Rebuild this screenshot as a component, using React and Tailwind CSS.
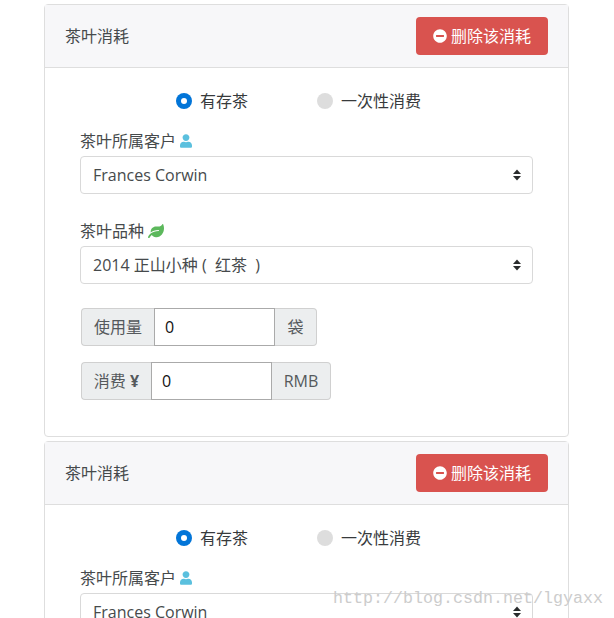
import React from "react";
import { FaUser, FaLeaf, FaMinusCircle } from "react-icons/fa";

function Radio({ checked, label }) {
  return (
    <label className="flex items-center gap-2">
      {checked ? (
        <span className="w-4 h-4 rounded-full bg-[#0275d8] flex items-center justify-center">
          <span className="w-1.5 h-1.5 rounded-full bg-white" />
        </span>
      ) : (
        <span className="w-4 h-4 rounded-full bg-[#dddddd]" />
      )}
      <span>{label}</span>
    </label>
  );
}

function Select({ value }) {
  return (
    <div className="relative">
      <select
        defaultValue={value}
        className="block w-full h-[38px] appearance-none bg-white border border-[#d9d9d9] rounded-[4px] pl-3 pr-8 text-[#464a4c] outline-none"
      >
        <option>{value}</option>
      </select>
      <svg className="absolute right-[12px] top-[13px] w-2 h-3" viewBox="0 0 8 12" fill="#292b2c">
        <path d="M4 0.5 L8 5 H0 Z" />
        <path d="M4 11.5 L8 7 H0 Z" />
      </svg>
    </div>
  );
}

function Group({ pre, post, preW, postW }) {
  return (
    <div className="flex h-[38px] w-fit text-[#55595c]">
      <span className={`${preW} flex items-center justify-center bg-[#eceeef] border border-[#d0d0d0] border-r-0 rounded-l-[4px]`}>{pre}</span>
      <input
        defaultValue="0"
        readOnly
        className="w-[121px] h-full bg-white border border-[#aaaaaa] pl-[10px] text-[#111111] outline-none"
      />
      <span className={`${postW} flex items-center justify-center bg-[#eceeef] border border-[#d0d0d0] border-l-0 rounded-r-[4px]`}>{post}</span>
    </div>
  );
}

function Card({ className }) {
  return (
    <section className={`border border-[#dedede] rounded-[4px] bg-white h-[433px] ${className}`}>
      <header className="h-[63px] flex items-center justify-between pl-5 pr-5 bg-[#f7f7f9] border-b border-[#dedede]">
        <h2 className="text-[#464a4c] font-normal">茶叶消耗</h2>
        <button className="w-[132px] h-[38px] flex items-center justify-center gap-[4px] bg-[#d9534f] text-white rounded-[4px]">
          <FaMinusCircle className="w-[14px] h-[14px]" />
          <span>删除该消耗</span>
        </button>
      </header>
      <div className="pt-[21px] px-[35px]">
        <div className="flex gap-[69px] pl-[96px] h-6 items-center text-[#373a3c]">
          <Radio checked label="有存茶" />
          <Radio label="一次性消费" />
        </div>
        <div className="mt-[16px]">
          <div className="h-[24px] mb-[3px] flex items-center gap-[4px] text-[#464a4c]">
            <span>茶叶所属客户</span>
            <FaUser className="h-[14px] w-[12px] text-[#5bc0de]" />
          </div>
          <Select value="Frances Corwin" />
        </div>
        <div className="mt-[25px]">
          <div className="h-[24px] mb-[3px] flex items-center gap-[4px] text-[#464a4c]">
            <span>茶叶品种</span>
            <FaLeaf className="w-4 h-4 text-[#5cb85c]" />
          </div>
          <Select value={"2014 正山小种 (\u00A0 红茶 \u00A0)"} />
        </div>
        <div className="mt-6 pl-px flex flex-col gap-4">
          <Group pre="使用量" post="袋" preW="w-[73px]" postW="w-[42px]" />
          <Group pre={<>消费&nbsp;<span className="font-bold">¥</span></>} post="RMB" preW="w-[70px]" postW="w-[59px]" />
        </div>
      </div>
    </section>
  );
}

export default function App() {
  return (
    <div
      className="relative h-[618px] w-[614px] overflow-hidden bg-white pt-1 pl-11 pr-[45px] text-base"
      style={{ fontFamily: '"Open Sans", "Noto Sans CJK SC", sans-serif' }}
    >
      <Card />
      <Card className="mt-[4px]" />
      <div
        className="absolute left-[333px] top-[589px] text-[16.67px] leading-5 text-[#cccccc] whitespace-nowrap"
        style={{ fontFamily: '"Liberation Mono", monospace' }}
      >
        http://blog.csdn.net/lgyaxx
      </div>
    </div>
  );
}
